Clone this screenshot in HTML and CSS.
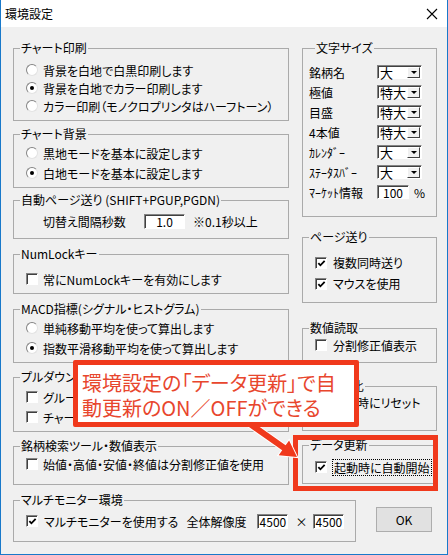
FILE: index.html
```html
<!DOCTYPE html>
<html lang="ja">
<head>
  <meta charset="UTF-8">
  <title>環境設定</title>
  <link rel="stylesheet" href="styles.css">
</head>
<body>
  <div class="window">
    <div class="titlebar">
      <span>環境設定</span>
      <svg class="close" width="12" height="12" viewBox="0 0 12 12"><path d="M1 1 L11 11 M11 1 L1 11" stroke="#000" stroke-width="1.1" fill="none"/></svg>
    </div>

    <div class="content">
      <div class="cols">
        <div class="col-left">
          <fieldset class="group g1">
            <legend>チャート印刷</legend>
            <div class="opt"><span class="radio"></span>背景を白地で白黒印刷します</div>
            <div class="opt"><span class="radio on"></span>背景を白地でカラー印刷します</div>
            <div class="opt"><span class="radio"></span>カラー印刷（モノクロプリンタはハーフトーン）</div>
          </fieldset>

          <fieldset class="group g2">
            <legend>チャート背景</legend>
            <div class="opt h20"><span class="radio"></span>黒地モードを基本に設定します</div>
            <div class="opt h20"><span class="radio on"></span>白地モードを基本に設定します</div>
          </fieldset>

          <fieldset class="group g3">
            <legend>自動ページ送り (SHIFT+PGUP,PGDN)</legend>
            <div class="opt h22 indent">
              <span class="lbl-interval">切替え間隔秒数</span>
              <input class="field f-sec" value="1.0" readonly>
              <span class="note">※0.1秒以上</span>
            </div>
          </fieldset>

          <fieldset class="group g4">
            <legend>NumLockキー</legend>
            <div class="opt"><span class="check"></span>常にNumLockキーを有効にします</div>
          </fieldset>

          <fieldset class="group g5">
            <legend>MACD指標(シグナル・ヒストグラム)</legend>
            <div class="opt h20"><span class="radio"></span>単純移動平均を使って算出します</div>
            <div class="opt h20"><span class="radio on"></span>指数平滑移動平均を使って算出します</div>
          </fieldset>

          <fieldset class="group g6">
            <legend>プルダウンメニュー</legend>
            <div class="opt h20"><span class="check"></span>グループ名を表示する</div>
            <div class="opt h20"><span class="check"></span>チャート種別を記憶する</div>
          </fieldset>

          <fieldset class="group g7">
            <legend>銘柄検索ツール・数値表示</legend>
            <div class="opt"><span class="check"></span>始値・高値・安値・終値は分割修正値を使用</div>
          </fieldset>
        </div>

        <div class="col-right">
          <fieldset class="group r1">
            <legend>文字サイズ</legend>
            <div class="size-row"><span class="size-lbl">銘柄名</span><span class="combo"><span class="combo-val">大</span><span class="combo-btn"></span></span></div>
            <div class="size-row"><span class="size-lbl">極値</span><span class="combo"><span class="combo-val">特大</span><span class="combo-btn"></span></span></div>
            <div class="size-row"><span class="size-lbl">目盛</span><span class="combo"><span class="combo-val">特大</span><span class="combo-btn"></span></span></div>
            <div class="size-row"><span class="size-lbl">4本値</span><span class="combo"><span class="combo-val">特大</span><span class="combo-btn"></span></span></div>
            <div class="size-row"><span class="size-lbl">ｶﾚﾝﾀﾞｰ</span><span class="combo"><span class="combo-val">大</span><span class="combo-btn"></span></span></div>
            <div class="size-row"><span class="size-lbl">ｽﾃｰﾀｽﾊﾞｰ</span><span class="combo"><span class="combo-val">大</span><span class="combo-btn"></span></span></div>
            <div class="size-row"><span class="size-lbl">ﾏｰｹｯﾄ情報</span><input class="field f-pct" value="100" readonly><span class="pct">%</span></div>
          </fieldset>

          <fieldset class="group r2">
            <legend>ページ送り</legend>
            <div class="opt h21"><span class="check on"><svg viewBox="0 0 10 10"><polyline points="1.5,4.5 3.8,7 8.5,2"/></svg></span>複数同時送り</div>
            <div class="opt h21"><span class="check on"><svg viewBox="0 0 10 10"><polyline points="1.5,4.5 3.8,7 8.5,2"/></svg></span>マウスを使用</div>
          </fieldset>

          <fieldset class="group r3">
            <legend>数値読取</legend>
            <div class="opt"><span class="check"></span>分割修正値表示</div>
          </fieldset>

          <fieldset class="group r4">
            <legend>チャート比</legend>
            <div class="opt"><span class="check"></span>起動時にリセット</div>
          </fieldset>

          <fieldset class="group r5">
            <legend>データ更新</legend>
            <div class="opt"><span class="check on"><svg viewBox="0 0 10 10"><polyline points="1.5,4.5 3.8,7 8.5,2"/></svg></span><span class="focus">起動時に自動開始</span></div>
          </fieldset>
        </div>
      </div>

      <div class="bottom-row">
        <fieldset class="group g8">
          <legend>マルチモニター環境</legend>
          <div class="opt h22">
            <span class="check on"><svg viewBox="0 0 10 10"><polyline points="1.5,4.5 3.8,7 8.5,2"/></svg></span>
            <span>マルチモニターを使用する</span>
            <span class="res-lbl">全体解像度</span>
            <input class="field f-res" value="4500" readonly>
            <span class="times">×</span>
            <input class="field f-res" value="4500" readonly>
          </div>
        </fieldset>
        <button class="ok">OK</button>
      </div>
    </div>

    <div class="mark-box"></div>
    <svg class="arrow" width="70" height="50" viewBox="240 415 70 50">
      <polygon points="251.7,421.5 285.6,445.3 289.1,440.4 297,457 278.7,455.2 282.2,450.3 248.3,426.5" fill="#f0391c" stroke="#fff" stroke-width="2" stroke-linejoin="miter" paint-order="stroke"/>
    </svg>
    <div class="callout">環境設定の「データ更新」で自<br>動更新のON／OFFができる</div>
  </div>
</body>
</html>
```

FILE: styles.css
```css
body {
  margin: 0;
  font-family: "Noto Sans CJK JP", "Noto Sans", sans-serif;
  font-size: 12px;
  color: #000;
  font-feature-settings: "palt";
}
.window {
  position: relative;
  width: 448px;
  height: 555px;
  box-sizing: border-box;
  border: 1px solid #1979ca;
  border-top: none;
  background: #f0f0f0;
  overflow: hidden;
}
.titlebar {
  height: 27px;
  background: #fff;
  display: flex;
  align-items: center;
  justify-content: space-between;
  padding: 0 9px 0 4px;
  font-size: 12px;
}
.content {
  padding: 15px 0 0 12px;
}
.cols {
  display: flex;
  gap: 13px;
  align-items: flex-start;
}
.col-left {
  width: 276px;
  display: flex;
  flex-direction: column;
}
.col-right {
  width: 135px;
  display: flex;
  flex-direction: column;
}
fieldset.group {
  margin: 0;
  padding: 0;
  min-width: 0;
  border: 1px solid #aaaaaa;
}
legend {
  margin-left: 6px;
  padding: 0 1px;
  height: 12px;
  line-height: 12px;
}
.opt {
  display: flex;
  align-items: center;
  gap: 5px;
  height: 18px;
  padding-left: 12px;
  white-space: nowrap;
}
.opt.h20 { height: 20px; }
.opt.h21 { height: 21px; }
.opt.h22 { height: 22px; }
.opt.indent { padding-left: 29px; gap: 0; }

/* left column spacing */
.g1 { padding: 7px 0 5px !important; }
.g2 { margin-top: 7px !important; padding: 3px 0 4px !important; }
.g3 { margin-top: 6px !important; padding: 4px 0 6px !important; }
.g4 { margin-top: 9px !important; padding: 10px 0 5px !important; }
.g5 { margin-top: 9px !important; padding: 3px 0 4px !important; }
.g6 { margin-top: 8px !important; padding: 4px 0 4px !important; }
.g7 { margin-top: 8px !important; padding: 3px 0 11px !important; }

/* right column spacing */
.r1 { padding: 8px 0 14px 6px !important; }
.r2 { margin-top: 14px !important; padding: 9px 0 8px !important; }
.r3 { margin-top: 19px !important; padding: 2px 0 8px !important; }
.r4 { margin-top: 17px !important; padding: 1px 0 19px !important; }
.r5 { margin-top: 8px !important; padding: 7px 0 7px !important; }
.r2 .opt, .r3 .opt, .r4 .opt, .r5 .opt { padding-left: 12px; gap: 6px; }

.radio {
  flex: none;
  position: relative;
  width: 12px;
  height: 12px;
  box-sizing: border-box;
  border-radius: 50%;
  border: 1px solid;
  border-color: #848484 #e2e2e2 #e2e2e2 #848484;
  background: #fff;
}
.radio.on::after {
  content: "";
  position: absolute;
  left: 3px;
  top: 3px;
  width: 4px;
  height: 4px;
  border-radius: 50%;
  background: #000;
}
.check {
  flex: none;
  width: 12px;
  height: 12px;
  box-sizing: border-box;
  border: 1px solid;
  border-color: #848484 #fff #fff #848484;
  box-shadow: inset 1px 1px 0 #404040;
  background: #fff;
  display: flex;
  align-items: center;
  justify-content: center;
}
.check svg {
  width: 9px;
  height: 9px;
  margin: 1px 0 0 1px;
}
.check polyline {
  fill: none;
  stroke: #000;
  stroke-width: 2;
}
.focus {
  outline: 1px dotted #000;
  outline-offset: 0;
  padding: 0 1px;
  line-height: 15px;
}

.field {
  box-sizing: border-box;
  height: 15px;
  padding: 0;
  border: 1px solid;
  border-color: #848484 #fff #fff #848484;
  box-shadow: inset 1px 1px 0 #404040;
  background: #fff;
  font: inherit;
  font-size: 12px;
  line-height: 13px;
  text-align: center;
  color: #000;
  outline: none;
}
.lbl-interval { width: 101px; }
.f-sec { width: 41px; }
.note { margin-left: 8px; }

.size-row {
  display: flex;
  align-items: center;
  height: 20px;
}
.size-lbl { width: 68px; white-space: nowrap; }
.combo {
  display: flex;
  width: 45px;
  height: 14px;
  box-sizing: border-box;
  border: 1px solid;
  border-color: #848484 #fff #fff #848484;
  box-shadow: inset 1px 1px 0 #404040;
  background: #fff;
  padding: 1px 1px 0 1px;
}
.combo-val {
  flex: 1;
  font-size: 13px;
  line-height: 12px;
  padding-left: 1px;
}
.combo-btn {
  width: 13px;
  height: 11px;
  box-sizing: border-box;
  background: #f0f0f0;
  border: 1px solid;
  border-color: #fff #404040 #404040 #fff;
  display: flex;
  align-items: center;
  justify-content: center;
}
.combo-btn::after {
  content: "";
  border-left: 3px solid transparent;
  border-right: 3px solid transparent;
  border-top: 3px solid #000;
}
.f-pct { width: 32px; height: 14px; }
.pct { margin-left: 5px; }

.bottom-row {
  display: flex;
  align-items: flex-start;
  margin-top: 9px;
}
.g8 {
  width: 343px;
  box-sizing: border-box;
  padding: 4px 0 9px !important;
}
.g8 .opt { gap: 0; }
.g8 .check { margin-right: 6px; }
.res-lbl { margin-left: 8px; }
.f-res { width: 31px; margin-left: 11px; height: 15px; }
.times { margin-left: 7px; }
.times + .f-res { margin-left: 6px; }
.ok {
  margin: 13px 0 0 20px;
  width: 56px;
  height: 25px;
  background: #e1e1e1;
  border: 1px solid #adadad;
  font: inherit;
  font-size: 12px;
  padding: 0;
}

/* annotation overlay */
.mark-box {
  position: absolute;
  left: 292px;
  top: 435px;
  width: 145px;
  height: 56px;
  box-sizing: border-box;
  border: 5px solid #f0391c;
}
.arrow {
  position: absolute;
  left: 239px;
  top: 415px;
}
.callout {
  position: absolute;
  left: 72px;
  top: 360px;
  width: 286px;
  height: 67px;
  box-sizing: border-box;
  border: 5px solid #f0391c;
  border-radius: 2px;
  background: #fff;
  padding: 5px 0 0 4px;
  color: #e8462d;
  font-size: 20px;
  line-height: 25px;
  white-space: nowrap;
}
```
